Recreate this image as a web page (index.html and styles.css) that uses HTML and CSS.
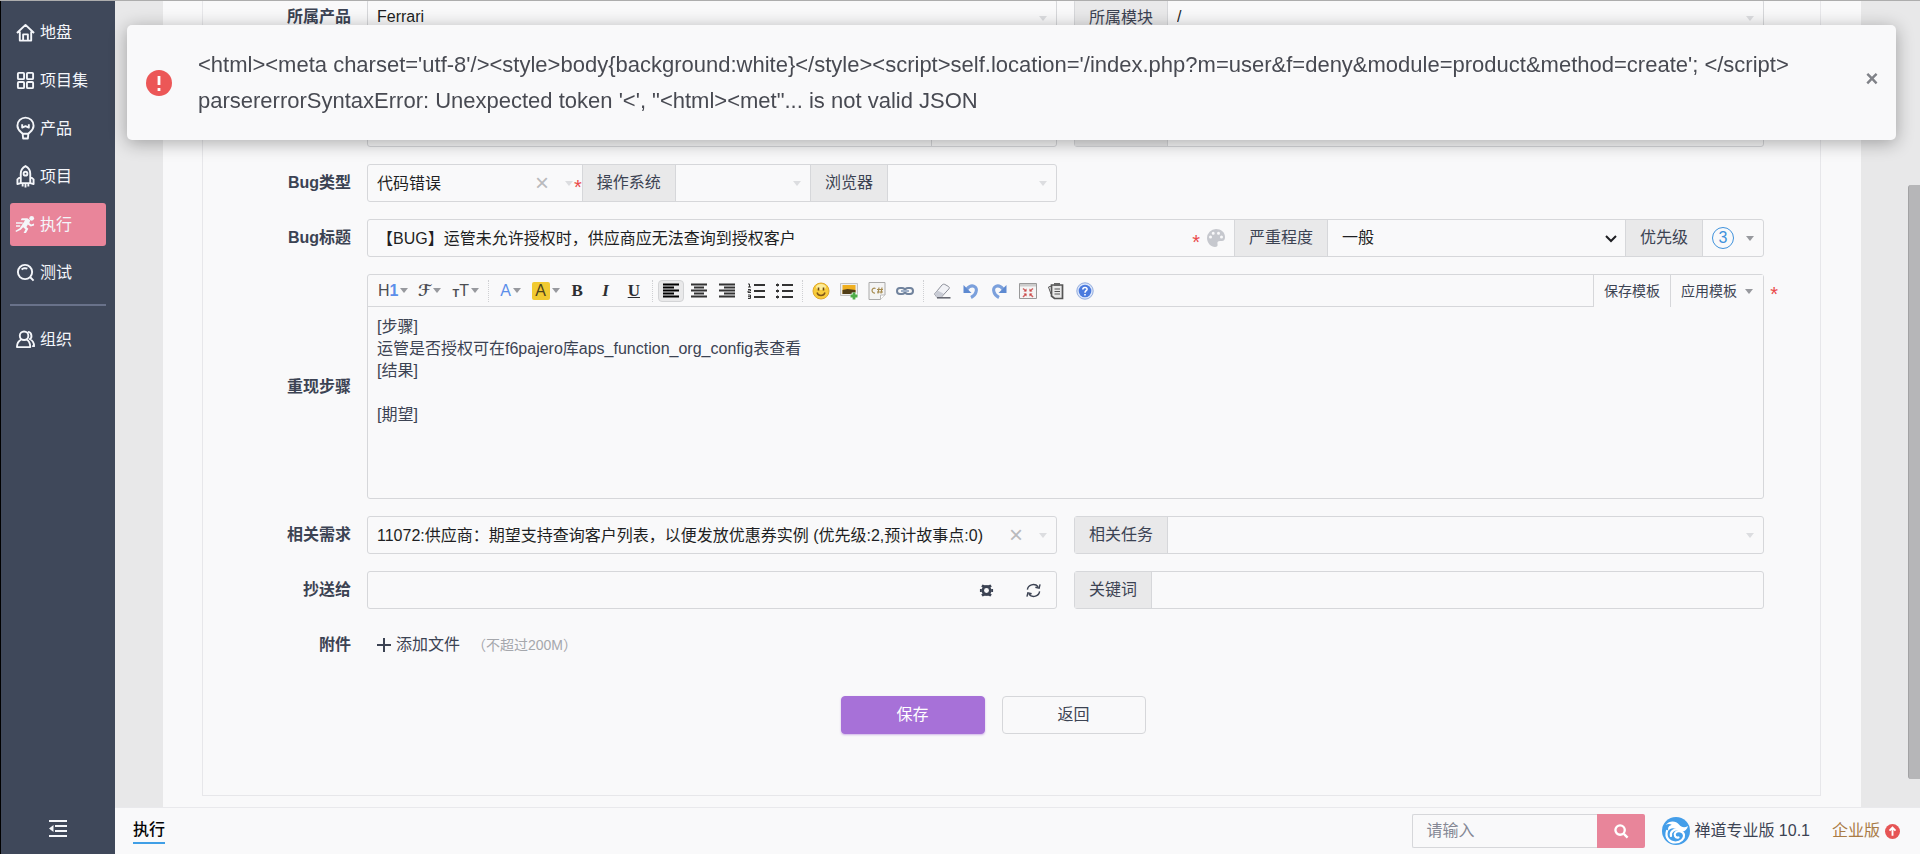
FILE: index.html
```html
<!DOCTYPE html>
<html lang="zh-CN">
<head>
<meta charset="utf-8">
<title>提Bug</title>
<link rel="stylesheet" href="styles.css">
</head>
<body>
<div class="app">
  <nav class="sidebar">
    <a class="nav-item" href="#"><svg class="nav-icon" viewBox="0 0 20 20"><path d="M1 10.500 10 2l9 8.500M4 9v9.500h12V9M7.500 18v-6h5v6"/></svg>地盘</a>
    <a class="nav-item" href="#"><svg class="nav-icon" viewBox="0 0 20 20"><rect x="2" y="2" width="6.500" height="6.500" rx="1"/><rect x="11.500" y="2" width="6.500" height="6.500" rx="1"/><rect x="2" y="11.500" width="6.500" height="6.500" rx="1"/><rect x="11.500" y="11.500" width="6.500" height="6.500" rx="1"/></svg>项目集</a>
    <a class="nav-item" href="#"><svg class="nav-icon tall" viewBox="0 0 20 24"><path d="M7 17.500C6 16 1.500 14 1.500 9a8.500 8.500 0 0 1 17 0c0 5-4.500 7-5.500 8.500zM7 17.500l.5 5h5l.5-5M6.500 7.500V11L10 9.500l3.500 1.500V7.500"/></svg>产品</a>
    <a class="nav-item" href="#"><svg class="nav-icon tall" viewBox="0 0 20 24"><path d="M5 19V9c0-4 3-7 5-8 2 1 5 4 5 8v10zM5 12l-3.500 3v5L5 19M15 12l3.500 3v5L15 19M7 20v2.500M10 20v3.500M13 20v2.500"/><circle cx="10" cy="9" r="2"/></svg>项目</a>
    <a class="nav-item active" href="#"><svg class="nav-icon" viewBox="0 0 20 20"><circle class="solid" cx="16.500" cy="3.500" r="2.500"/><path class="solid" d="M6 3.500h6l3 2-1 3 2 1.500 3-1v2l-3.500 1-3-2-1.500 2.500 2 2-2.500 4.500H8l2-4-2.500-2L5 15.500 0 18l-.5-1.500L4 14l5.500-8.500H5z"/><path class="thin" d="M0 8.500h7M0 11.500h4.500"/></svg>执行</a>
    <a class="nav-item" href="#"><svg class="nav-icon" viewBox="0 0 20 20"><circle cx="9.500" cy="9.500" r="7.500"/><path d="m15 15 3.500 3.500M6 7c1-1.500 4-2 6-1"/></svg>测试</a>
    <hr class="nav-rule">
    <a class="nav-item" href="#"><svg class="nav-icon" viewBox="0 0 20 20"><circle cx="8.500" cy="6" r="4.500"/><path d="M5.500 10C2.500 11.500 1 14 1 18h14c0-4-1-6.500-4-8M12.500 2c4 0 5 6 2 7.500 3 1.500 4.500 4 4.500 7.500h-2"/></svg>组织</a>
    <button class="nav-fold" type="button" aria-label="收起"><svg viewBox="0 0 18 17"><path d="M0 0h18v2H0zM6 5h12v2H6zM6 10h12v2H6zM0 15h18v2H0zM4.500 5v7L0 8.500z"/></svg></button>
  </nav>

  <main class="main">
    <div class="scroller">
      <div class="panel">
        <form class="form">
          <div class="row first">
            <label class="label" for="product">所属产品</label>
            <div class="pair">
              <div class="group"><input class="field" id="product" value="Ferrari"><i class="caret"></i></div>
              <div class="group"><label class="addon" for="module">所属模块</label><input class="field" id="module" value="/"><i class="caret"></i></div>
            </div>
          </div>
          <div class="row covered">
            <div class="pair">
              <div class="group"><input class="field" id="build" aria-label="影响版本"><button class="side-button" type="button" aria-label="所有"></button></div>
              <div class="group"><span class="addon blank"></span><input class="field" id="assigned" aria-label="当前指派"></div>
            </div>
          </div>
          <div class="row">
            <label class="label" for="type">Bug类型</label>
            <div class="pair">
              <div class="group types">
                <div class="cell"><input class="field" id="type" value="代码错误"><button class="clear" type="button" aria-label="清除">×</button><i class="caret"></i><span class="star">*</span></div>
                <label class="addon" for="os">操作系统</label>
                <div class="cell"><input class="field" id="os"><i class="caret"></i></div>
                <label class="addon" for="browser">浏览器</label>
                <div class="cell"><input class="field" id="browser"><i class="caret"></i></div>
              </div>
            </div>
          </div>
          <div class="row">
            <label class="label" for="title">Bug标题</label>
            <div class="group">
              <input class="field" id="title" value="【BUG】运管未允许授权时，供应商应无法查询到授权客户"><span class="star">*</span>
              <button class="palette" type="button" aria-label="颜色"><svg viewBox="0 0 18 18"><path fill-rule="evenodd" d="M9 0a9 9 0 0 0-9 9c0 5 4 9 8 9 2 0 3-1 2.500-3-.5-2 .5-3 2.500-3h2c2 0 3-1.500 3-4 0-5-4-8-9-8M2 8a1.500 1.500 0 1 0 3 0 1.500 1.500 0 0 0-3 0M4.700 4.200a1.500 1.500 0 1 0 3 0 1.500 1.500 0 0 0-3 0M10 4.200a1.500 1.500 0 1 0 3 0 1.500 1.500 0 0 0-3 0M13 8a1.500 1.500 0 1 0 3 0 1.500 1.500 0 0 0-3 0"/></svg></button>
              <label class="addon" for="severity">严重程度</label>
              <div class="severity"><select class="select" id="severity"><option>一般</option></select><svg class="chevron" viewBox="0 0 14 9"><path d="m2 2 5 5 5-5"/></svg></div>
              <span class="addon">优先级</span>
              <button class="priority" type="button"><span class="pri">3</span><i class="caret dark"></i></button>
            </div>
          </div>
          <div class="row">
            <label class="label" for="steps">重现步骤</label>
            <div class="editor">
              <div class="toolbar">
                <div class="tools drop">
                  <button class="tool" type="button">H<b class="blue">1</b><i class="caret dark"></i></button>
                  <button class="tool script" type="button">ℱ<i class="caret dark"></i></button>
                  <button class="tool" type="button"><small>T</small>T<i class="caret dark"></i></button>
                </div>
                <div class="tools colors">
                  <button class="tool" type="button"><span class="blue">A</span><i class="caret dark"></i></button>
                  <button class="tool" type="button"><span class="mark">A</span><i class="caret dark"></i></button>
                </div>
                <div class="tools three">
                  <button class="tool serif" type="button"><b>B</b></button>
                  <button class="tool serif" type="button"><b><em>I</em></b></button>
                  <button class="tool serif" type="button"><b><u>U</u></b></button>
                </div>
                <div class="tools five">
                  <button class="tool on" type="button" aria-label="左对齐"><svg class="lines" viewBox="0 0 18 16"><path d="M1 1.500h16M1 4.500h11M1 7.500h16M1 10.500h11M1 13.500h16"/></svg></button>
                  <button class="tool" type="button" aria-label="居中"><svg class="lines" viewBox="0 0 18 16"><path d="M1 1.500h16M4 4.500h10M1 7.500h16M4 10.500h10M1 13.500h16"/></svg></button>
                  <button class="tool" type="button" aria-label="右对齐"><svg class="lines" viewBox="0 0 18 16"><path d="M1 1.500h16M6 4.500h11M1 7.500h16M6 10.500h11M1 13.500h16"/></svg></button>
                  <button class="tool" type="button" aria-label="编号"><svg class="lines" viewBox="0 0 18 16"><path d="M7 2h11M7 8h11M7 14h11"/><path class="hair" d="M1 1h1.500v3M1 4h3M1 6.500h2.500V8H1v1.500h3M1 12h2.500v3.500H1M1 13.700h2"/></svg></button>
                  <button class="tool" type="button" aria-label="列表"><svg class="lines" viewBox="0 0 18 16"><path d="M7 2h11M7 8h11M7 14h11M1 2h3M1 8h3M1 14h3"/><path class="hair" d="M2.500 .5v3M2.500 6.500v3M2.500 12.500v3"/></svg></button>
                </div>
                <div class="tools four">
                  <button class="tool" type="button" aria-label="表情"><svg viewBox="0 0 18 18"><circle cx="9" cy="9" r="8" fill="#f8cc3a" stroke="#e0a92e"/><ellipse cx="9" cy="5" rx="5" ry="3" fill="#fdec9a"/><path d="M5 10.500c1 4 7 4 8 0" fill="none" stroke="#805718" stroke-width="1.400"/><path d="M6.500 5.500v3M11.500 5.500v3" stroke="#6b4a17" stroke-width="1.600"/></svg></button>
                  <button class="tool" type="button" aria-label="图片"><svg viewBox="0 0 18 18"><path d="M.5 1.500h17v12H.5z" fill="#eee" stroke="#c2c2c2"/><path d="M2.500 3h13v9h-13z" fill="#efaf20"/><path d="M2.500 8l5-1 8 1v4h-13z" fill="#503d17"/><path d="M10.500 14h7M14 10.500v7" stroke="#fff" stroke-width="4.500"/><path d="M10.500 14h7M14 10.500v7" stroke="#4fae48" stroke-width="2.800"/></svg></button>
                  <button class="tool" type="button" aria-label="代码"><svg viewBox="0 0 18 18"><path d="M1 .5h16V13l-4.500 4.500H1z" fill="#f4f4f4" stroke="#aaa"/><path d="M12.500 17.500V13H17" fill="#fff" stroke="#bbb"/><path d="M7.500 6.500c-4-2-5 5-.5 4.500M9 7.500h6M9 10h6M11 5.500l-1 6M14 5.500l-1 6" fill="none" stroke="#a58a4d" stroke-width="1.200"/></svg></button>
                  <button class="tool" type="button" aria-label="链接"><svg viewBox="0 0 18 18"><g fill="none" stroke="#71839d" stroke-width="2"><rect x="1" y="6" width="8" height="6" rx="3"/><rect x="9" y="6" width="8" height="6" rx="3"/></g><path d="M5 9h8" stroke="#9fb0c8" stroke-width="2"/></svg></button>
                </div>
                <div class="tools six">
                  <button class="tool" type="button" aria-label="清除格式"><svg viewBox="0 0 18 18"><path d="M1.500 12 9 3c1-1 2-1 3-.5l3.500 2c1 .6 1 1.500.3 2.500L8 15.500H4z" fill="#f1f2f6" stroke="#8c8f99"/><path d="M4 15.500 1.500 12l3-3.500 6 3L8 15.500z" fill="#c9ccd5"/><path d="M4 15.800h13.500" stroke="#60636c" stroke-width="1.500"/></svg></button>
                  <button class="tool" type="button" aria-label="撤销"><svg viewBox="0 0 18 18"><path d="M5 7c5-6 11-2 9 3-.6 2.500-2 4-5 5.500" fill="none" stroke="#7ba0dc" stroke-width="3.200"/><path d="M1.500 3v8h8z" fill="#5e8ad1"/></svg></button>
                  <button class="tool" type="button" aria-label="重做"><svg viewBox="0 0 18 18"><path d="M13 7C8 1 2 5 4 10c.6 2.500 2 4 5 5.500" fill="none" stroke="#7ba0dc" stroke-width="3.200"/><path d="M16.500 3v8h-8z" fill="#5e8ad1"/></svg></button>
                  <button class="tool" type="button" aria-label="全屏"><svg viewBox="0 0 18 18"><path d="M.5 1.500h17v15H.5z" fill="#f5f5f5" stroke="#999"/><path d="M1 2h16v2.500H1z" fill="#ccc"/><path d="m4 6.500 3 2.500M14 6.500 11 9M4 15l3-3M14 15l-3-3" stroke="#d26464" stroke-width="1.500"/><path d="M7.500 6.500v3h-3zM10.500 6.500v3h3zM7.500 14.500v-3h-3zM10.500 14.500v-3h3z" fill="#c94848"/></svg></button>
                  <button class="tool" type="button" aria-label="粘贴"><svg viewBox="0 0 18 18"><path d="M4.500 3h11v13.500h-8L4.500 14z" fill="#e9e9e9" stroke="#555" stroke-width="1.700"/><path d="M7 1h6v3H7z" fill="#666"/><path d="M7.500 7h5.500M7.500 9.500h5.500M7.500 12h5.500M4 12 1.500 5l3-1" fill="none" stroke="#555"/></svg></button>
                  <button class="tool" type="button" aria-label="帮助"><svg viewBox="0 0 18 18"><circle cx="9" cy="9" r="8.200" fill="#dbe6fa" stroke="#93acdd"/><circle cx="9" cy="9" r="6.300" fill="#4a7ade"/><path d="M6.800 7.500C7 4.500 11.500 5 11 7.500c-.3 1.300-2 1.300-2 3.200M9 12v1.600" fill="none" stroke="#fff" stroke-width="1.600"/></svg></button>
                </div>
                <div class="templates">
                  <button class="template" type="button">保存模板</button>
                  <button class="template" type="button">应用模板<i class="caret dark"></i></button>
                </div>
              </div>
              <textarea class="steps" id="steps">[步骤]
运管是否授权可在f6pajero库aps_function_org_config表查看
[结果]

[期望]</textarea>
              <span class="star outside">*</span>
            </div>
          </div>
          <div class="row">
            <label class="label" for="story">相关需求</label>
            <div class="pair">
              <div class="group"><input class="field" id="story" value="11072:供应商：期望支持查询客户列表，以便发放优惠券实例 (优先级:2,预计故事点:0)"><button class="clear" type="button" aria-label="清除">×</button><i class="caret"></i></div>
              <div class="group"><label class="addon" for="task">相关任务</label><input class="field" id="task"><i class="caret"></i></div>
            </div>
          </div>
          <div class="row">
            <label class="label" for="mailto">抄送给</label>
            <div class="pair">
              <div class="group"><input class="field" id="mailto">
                <button class="icon-button" type="button" aria-label="设置"><svg viewBox="0 0 16 16"><circle class="ring" cx="8" cy="8" r="4.300"/><path d="M3.800 1.500 6 2.300h4l2.200-.8 1.400 2.200-1.600 1.300h-8L2.400 3.700zM3.800 14.500 6 13.700h4l2.200.8 1.400-2.200-1.600-1.300h-8l-1.600 1.300zM1 6.500h2v3H1zM13 6.500h2v3h-2z"/><circle class="hole" cx="8" cy="8" r="2.600"/></svg></button>
                <button class="icon-button" type="button" aria-label="刷新"><svg class="stroke" viewBox="0 0 16 16"><path d="M1.500 7C2 2 9-.5 13 4M14.500 9c-.5 5-7.500 7.500-11.500 3M15 1.500l-1 4-4-1M1 14.500l1-4 4 1"/></svg></button>
              </div>
              <div class="group"><label class="addon" for="keywords">关键词</label><input class="field" id="keywords"></div>
            </div>
          </div>
          <div class="row files">
            <span class="label">附件</span>
            <div class="upload"><button class="add-file" type="button"><svg viewBox="0 0 14 14"><path d="M7 0v14M0 7h14"/></svg>添加文件</button><span class="hint">（不超过200M）</span></div>
          </div>
          <div class="actions">
            <button class="btn primary" type="submit">保存</button>
            <button class="btn" type="button">返回</button>
          </div>
        </form>
      </div>
      <div class="thumb"></div>
    </div>

    <footer class="footer">
      <a class="tab" href="#">执行</a>
      <div class="search">
        <input class="search-box" type="text" placeholder="请输入" aria-label="搜索">
        <button class="search-button" type="button" aria-label="搜索"><svg viewBox="0 0 16 16"><circle cx="6.500" cy="6.500" r="5"/><path d="m10.500 10.500 4 4"/></svg></button>
      </div>
      <a class="version" href="#"><svg class="logo" viewBox="0 0 28 28"><circle cx="14" cy="14" r="14"/><path class="wing" d="M3.500 8C8 3 14 4 17 7.500c2.500 3 5.500 3.500 9 1.500-1 5-5.500 7-9.500 4.500C12 10 8 11 6.500 14 5 10 8 8 10 8 7.500 6.500 5.500 7 3.500 8z"/><path d="M5 14c-2 6 2 11.500 8.500 11.500 5.500 0 9-4 8.500-7.500-.5-4-6-5-8.500-2.500-2 2.500 0 6 3 5"/><path d="M9 19c-1-4 3-7.500 7.500-6.500"/></svg>禅道专业版 10.1</a>
      <a class="edition" href="#">企业版<svg viewBox="0 0 16 16"><circle cx="8" cy="8" r="8"/><path d="M8 12.500V4M4.800 7 8 3.800 11.200 7"/></svg></a>
    </footer>
  </main>
</div>

<div class="toast" role="alert">
  <svg class="toast-icon" viewBox="0 0 26 26"><circle cx="13" cy="13" r="13"/><path d="M13 6v9M13 18v3"/></svg>
  <p class="toast-text">&lt;html&gt;&lt;meta charset='utf-8'/&gt;&lt;style&gt;body{background:white}&lt;/style&gt;&lt;script&gt;self.location='/index.php?m=user&amp;f=deny&amp;module=product&amp;method=create'; &lt;/script&gt;<br>parsererrorSyntaxError: Unexpected token '&lt;', "&lt;html&gt;&lt;met"... is not valid JSON</p>
  <button class="toast-close" type="button" aria-label="关闭">×</button>
</div>
</body>
</html>
```

FILE: styles.css
```css
* { box-sizing: border-box; }
body {
  margin: 0;
  overflow: hidden;
  background: #e8e8e9;
  color: #3c4353;
  font: 16px/20px "Liberation Sans", "Noto Sans CJK SC", sans-serif;
}
button, input, select, textarea { margin: 0; padding: 0; border: 0; background: none; color: inherit; font: inherit; outline: 0; }
a { color: inherit; text-decoration: none; }
svg { display: block; }

.app { display: flex; height: 100vh; border-top: 1px solid #adadad; }

.sidebar {
  display: flex; flex-direction: column; gap: 5px;
  width: 115px; flex: none;
  padding: 10px 9px 0;
  border-left: 1px solid #000;
  background: #3f485a;
  color: #f4f6fa;
}
.nav-item { display: flex; align-items: center; gap: 5px; height: 43px; padding-left: 6px; border-radius: 3px; }
.nav-item.active { background: #e9859a; }
.nav-icon { width: 19px; height: 19px; fill: none; stroke: currentColor; stroke-width: 2; stroke-linejoin: round; overflow: visible; }
.nav-icon.tall { height: 23px; }
.nav-icon .solid { fill: currentColor; stroke: none; }
.nav-icon .thin { stroke-width: 1.500; }
.nav-rule { width: 100%; height: 2px; margin: 5px 0 7px; border: 0; background: #69728a; }
.nav-fold { margin: auto auto 17px; }
.nav-fold svg { width: 18px; height: 17px; fill: #f4f6fa; }

.main { display: flex; flex: 1; flex-direction: column; min-width: 0; }
.scroller { position: relative; flex: 1; min-height: 0; overflow: hidden; padding: 0 59px 0 48px; }
.panel { height: 100%; padding: 0 40px 11px 39px; background: #f9f9fa; }
.form {
  display: flex; flex-direction: column; gap: 17px;
  height: 100%; padding-right: 56px;
  border: 1px solid #e7e7ea; border-top: 0;
}
.row { display: grid; grid-template-columns: 148px 1fr; column-gap: 16px; align-items: center; }
.row.first { margin-top: -2px; align-items: start; line-height: 36px; }
.row.covered { margin-top: 55px; }
.row.covered .pair { grid-column: 2; }
.label { text-align: right; font-weight: 700; }
.pair { display: grid; grid-template-columns: 1fr 1fr; gap: 17px; }
.group { position: relative; display: flex; align-items: center; height: 38px; border: 1px solid #d6d7da; border-radius: 3px; }
.addon { display: flex; align-items: center; align-self: stretch; flex: none; padding: 0 14px; border-right: 1px solid #d6d7da; background: #e9e9ea; }
.addon.blank { width: 93px; }
.field { flex: 1; min-width: 0; height: 36px; padding: 0 9px 2px; color: #1e1f23; }
.caret { flex: none; width: 0; height: 0; margin-right: 9px; border: 4px solid transparent; border-top: 5px solid #dcdde0; border-bottom: 0; }
.caret.dark { margin: 0; border-top-color: #97999e; }
.clear { flex: none; width: 24px; margin-right: 11px; color: #b9babd; font-size: 24px; line-height: 24px; }
.star { color: #ea4a4a; font-size: 20px; line-height: 12px; padding-top: 7px; }
.side-button { width: 125px; align-self: stretch; border-left: 1px solid #d6d7da; }

.types { display: grid; grid-template-columns: 215fr auto 135fr auto 169fr; }
.cell { display: flex; align-items: center; min-width: 0; height: 36px; }
.cell .clear { margin-right: 11px; }
.cell .star { margin-left: -8px; }
.types .addon { border-left: 1px solid #d6d7da; }

.palette { margin: 0 9px 0 7px; }
.palette svg { width: 18px; height: 18px; fill: #c6c8ce; }
.palette + .addon, .severity + .addon { border-left: 1px solid #d6d7da; }
.severity { position: relative; width: 297px; }
.select { width: 100%; height: 36px; padding: 0 14px; color: #1e1f23; appearance: none; }
.chevron { position: absolute; top: 14px; right: 7px; width: 14px; height: 9px; fill: none; stroke: #1e1f23; stroke-width: 2; pointer-events: none; }
.priority { display: flex; align-items: center; gap: 12px; width: 60px; padding-left: 9px; }
.pri { width: 22px; height: 22px; border: 1px solid #3f92dc; border-radius: 50%; color: #3f92dc; line-height: 20px; }

.editor { position: relative; height: 225px; border: 1px solid #d6d7da; border-radius: 3px; }
.toolbar { display: flex; align-items: center; height: 32px; padding-left: 7px; border-bottom: 1px solid #d6d7da; }
.tools { display: grid; grid-auto-flow: column; grid-auto-columns: 1fr; align-items: center; margin-right: 4px; padding-right: 4px; border-right: 1px dotted #cfd0d3; }
.drop { width: 114px; }
.colors { width: 70px; margin-right: 0; padding: 0; border-right: 0; }
.three { width: 90px; }
.five { width: 146px; }
.four { width: 117px; }
.six { width: 171px; border-right: 0; padding: 0; }
.tool { display: flex; align-items: center; justify-content: center; height: 22px; color: #4c4e53; }
.tool.on { margin: 0 1px; border: 1px solid #d3d4d6; border-radius: 4px; background: #e9e9ea; }
.tool small { font-size: 11px; padding-top: 4px; font-weight: 700; }
.tool svg { width: 18px; height: 18px; flex: none; }
.tool .lines { height: 16px; fill: none; stroke: #333; stroke-width: 2; }
.tool .lines .hair { stroke-width: 1; }
.tool.on .lines { stroke: #000; }
.tool .caret { margin-left: 2px; }
.script { font-family: "DejaVu Sans", sans-serif; font-weight: 700; }
.serif { color: #2d2e31; font-family: "Liberation Serif", serif; font-size: 17px; }
.blue { color: #5c8eea; }
.mark { width: 18px; height: 18px; border-radius: 2px; background: #f1ca31; color: #4d431d; line-height: 18px; }
.templates { display: flex; align-self: stretch; margin-left: auto; margin-bottom: -1px; background: #f9f9fa; }
.template { display: flex; align-items: center; gap: 8px; padding: 0 10px; border-left: 1px solid #d6d7da; font-size: 14px; }
.steps { display: block; width: 100%; height: 190px; padding: 9px; line-height: 22px; resize: none; }
.outside { position: absolute; top: 6px; right: -15px; }

.icon-button { margin-right: 15px; margin-left: 17px; }
.icon-button svg { width: 15px; height: 15px; fill: #3c4353; }
.icon-button .ring { fill: #3c4353; stroke: #3c4353; stroke-width: 2; }
.icon-button .hole { fill: #f9f9fa; }
.icon-button .stroke { fill: none; stroke: #3c4353; stroke-width: 1.500; }
.files { min-height: 38px; }
.upload { display: flex; align-items: center; gap: 12px; padding-left: 10px; }
.add-file { display: flex; align-items: center; gap: 5px; }
.add-file svg { width: 14px; height: 14px; stroke: #3c4353; stroke-width: 2; }
.hint { color: #a5a7ac; font-size: 14px; }
.actions { display: flex; justify-content: center; gap: 17px; margin: 15px 0 0 19px; }
.btn { width: 144px; height: 38px; border: 1px solid #d6d7da; border-radius: 4px; }
.primary { border-color: #a771d8; background: #a771d8; color: #fff; box-shadow: 0 1px 2px #a771d880; }
.thumb { position: absolute; top: 184px; right: 0; width: 12px; height: 594px; border-left: 1px solid #a2a2a4; border-radius: 3px 0 0 3px; background: #b6b6b8; }

.footer { display: flex; align-items: center; height: 47px; flex: none; padding: 0 20px 0 18px; border-top: 1px solid #e9e9ec; background: #f9f9fa; }
.tab { border-bottom: 2px solid #409fe6; color: #050506; font-weight: 500; line-height: 24px; }
.search { display: flex; height: 34px; margin: 0 17px 0 auto; }
.search-box { width: 185px; padding: 0 13px; border: 1px solid #d6d7da; border-right: 0; border-radius: 2px 0 0 2px; }
.search-box::placeholder { color: #858895; opacity: 1; }
.search-button { display: grid; place-items: center; width: 48px; border-radius: 0 2px 2px 0; background: #e8859a; }
.search-button svg { width: 15px; height: 15px; fill: none; stroke: #fff; stroke-width: 2.500; }
.version { display: flex; align-items: center; gap: 4px; margin-right: 22px; }
.logo { width: 28px; height: 28px; fill: #449ee9; }
.logo path { fill: none; stroke: #fff; stroke-width: 2.200; stroke-linecap: round; }
.logo .wing { fill: #fff; stroke: none; }
.edition { display: flex; align-items: center; gap: 5px; color: #a97b45; }
.edition svg { width: 15px; height: 15px; fill: #e65555; }
.edition path { fill: none; stroke: #fff; stroke-width: 2; }

.toast {
  position: fixed; top: 25px; right: 24px; left: 127px;
  display: flex; align-items: center;
  padding: 22px 16px 21px 19px;
  border-radius: 5px;
  background: #f9f9fa;
  box-shadow: 0 3px 18px rgba(0, 0, 0, .32);
}
.toast-icon { width: 26px; height: 26px; flex: none; margin-right: 26px; fill: #ec5757; }
.toast-icon path { stroke: #fff; stroke-width: 2.800; }
.toast-text { flex: 1; margin: 0; color: #484a52; font-size: 22px; line-height: 36px; }
.toast-close { width: 16px; margin-bottom: 8px; color: #808288; font-size: 22px; font-weight: 700; line-height: 20px; }
```
